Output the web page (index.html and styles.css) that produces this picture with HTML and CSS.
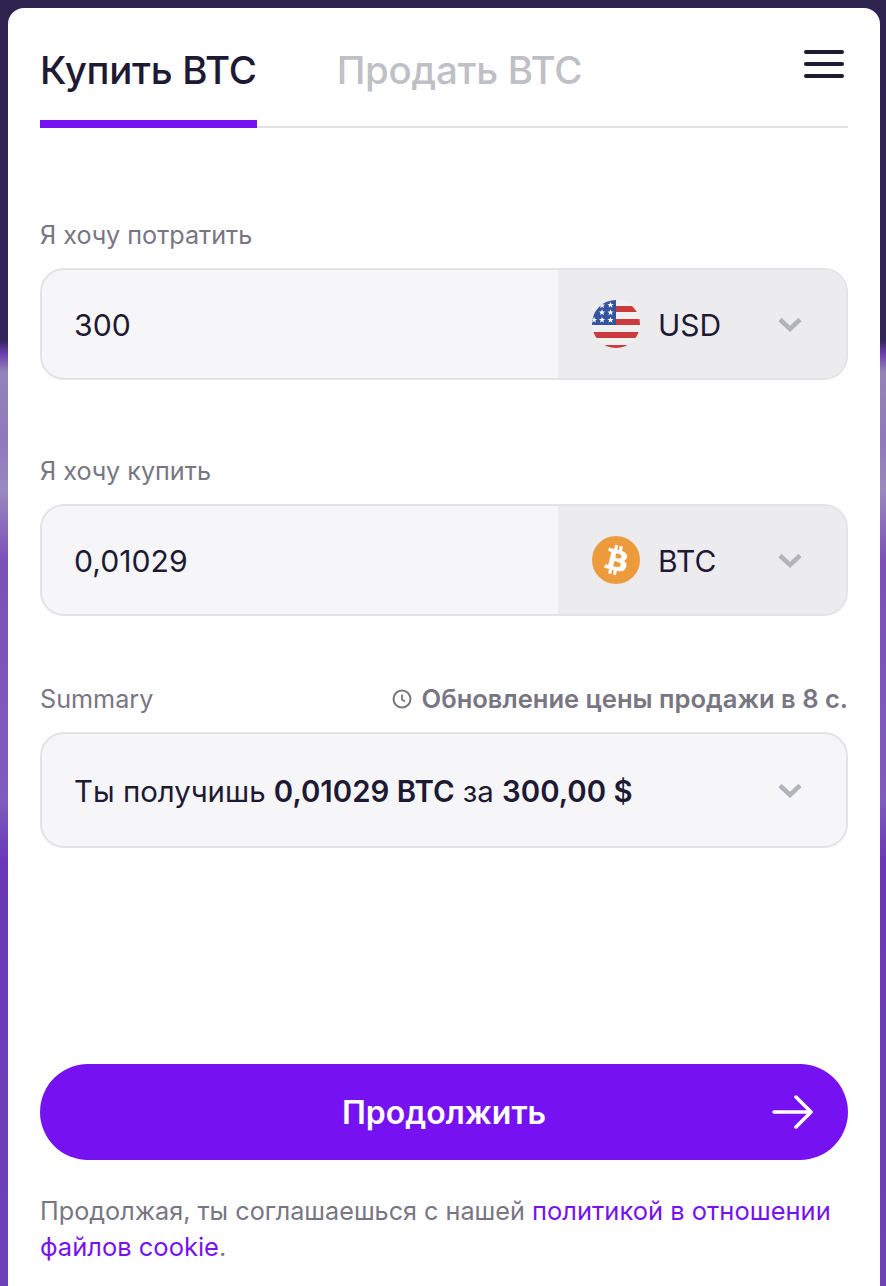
FILE: index.html
```html
<!doctype html>
<html>
<head>
<meta charset="utf-8">
<title>Купить BTC</title>
<link rel="stylesheet" href="styles.css">
</head>
<body>
<div class="card">
	<div class="tabs">
		<div class="tab active">Купить BTC</div>
		<div class="tab">Продать BTC</div>
		<div class="burger"><i></i><i></i><i></i></div>
	</div>

	<div class="label first">Я хочу потратить</div>
	<div class="field">
		<div class="value">300</div>
		<div class="picker">
			<svg class="coin" viewBox="0 0 48 48">
				<defs>
					<clipPath id="round"><circle cx="24" cy="24" r="24"/></clipPath>
					<polygon id="star" points="0,-3.200 .9,-1 3.100,-1 1.300,.4 2,2.700 0,1.300 -2,2.700 -1.300,.4 -3.100,-1 -.9,-1"/>
				</defs>
				<g clip-path="url(#round)">
					<rect width="48" height="48" fill="#f1f0f0"/>
					<rect x="24" y="6" width="24" height="6" fill="#cd3a3e"/>
					<rect x="24" y="19" width="24" height="6" fill="#cd3a3e"/>
					<rect y="32" width="48" height="6" fill="#cd3a3e"/>
					<rect y="45" width="48" height="3" fill="#cd3a3e"/>
					<rect width="24" height="25" fill="#35549f"/>
					<g fill="#fff">
						<use href="#star" x="18.500" y="5"/>
						<use href="#star" x="10" y="5.500"/>
						<use href="#star" x="18.500" y="12.500"/>
						<use href="#star" x="10" y="12.500"/>
						<use href="#star" x="18.500" y="20"/>
						<use href="#star" x="10" y="20"/>
						<use href="#star" x="2" y="20"/>
					</g>
				</g>
			</svg>
			<span class="code">USD</span>
			<svg class="chev" viewBox="0 0 24 15"><path d="M2 2.500 12 12 22 2.500" fill="none" stroke="#b3b3bb" stroke-width="4.500"/></svg>
		</div>
	</div>

	<div class="label second">Я хочу купить</div>
	<div class="field">
		<div class="value">0,01029</div>
		<div class="picker">
			<svg class="coin" viewBox="0 0 32 32">
				<circle cx="16" cy="16" r="16" fill="#ec9a3c"/>
				<path fill="#fff" fill-rule="evenodd" stroke="#fff" stroke-width=".3" d="M23.189 14.020c.314-2.096-1.283-3.223-3.465-3.975l.708-2.840-1.728-.430-.690 2.765c-.454-.114-.920-.220-1.385-.326l.695-2.783L15.596 6l-.708 2.839c-.376-.086-.746-.170-1.104-.260l.002-.009-2.384-.595-.460 1.846s1.283.294 1.256.312c.700.175.826.638.805 1.006l-.806 3.235c.048.012.110.030.180.057l-.183-.045-1.130 4.532c-.086.212-.303.531-.793.410.018.025-1.256-.313-1.256-.313l-.858 1.978 2.250.561c.418.105.828.215 1.231.318l-.715 2.872 1.727.430.708-2.840c.472.127.930.245 1.378.357l-.706 2.828 1.728.430.715-2.866c2.948.558 5.164.333 6.097-2.333.752-2.146-.037-3.385-1.588-4.192 1.130-.260 1.980-1.003 2.207-2.538zm-3.950 5.538c-.533 2.147-4.148.986-5.320.695l.950-3.805c1.172.293 4.929.872 4.370 3.110zm.535-5.569c-.487 1.953-3.495.960-4.470.717l.860-3.450c.975.243 4.118.696 3.610 2.733z"/>
			</svg>
			<span class="code">BTC</span>
			<svg class="chev" viewBox="0 0 24 15"><path d="M2 2.500 12 12 22 2.500" fill="none" stroke="#b3b3bb" stroke-width="4.500"/></svg>
		</div>
	</div>

	<div class="summary-head">
		<span>Summary</span>
		<span class="timer">
			<svg viewBox="0 0 20 20"><circle cx="10" cy="10" r="8.500" fill="none" stroke="#787683" stroke-width="2"/><path d="M10 5.500V10.500L13 12.500" fill="none" stroke="#787683" stroke-width="1.800"/></svg>
			Обновление цены продажи в 8 с.
		</span>
	</div>
	<div class="summary">
		<div>Ты получишь <b>0,01029 BTC</b> за <b>300,00 $</b></div>
		<svg class="chev" viewBox="0 0 24 15"><path d="M2 2.500 12 12 22 2.500" fill="none" stroke="#b3b3bb" stroke-width="4.500"/></svg>
	</div>

	<div class="button">
		Продолжить
		<svg class="arrow" viewBox="0 0 42 34"><path d="M2 17H39M24 2 39 17 24 32" fill="none" stroke="#fff" stroke-width="3.500" stroke-linecap="round" stroke-linejoin="round"/></svg>
	</div>

	<p class="legal">Продолжая, ты соглашаешься с нашей <a href="#">политикой в отношении файлов cookie</a>.</p>
</div>
</body>
</html>
```

FILE: styles.css
```css
html, body {
	margin: 0;
	height: 1286px;
	overflow: hidden;
}
body {
	box-sizing: border-box;
	padding: 8px 6px 0 8px;
	font-family: Inter, sans-serif;
	color: #1e1a34;
	background: linear-gradient(180deg, #2f2350 0, #33245a 340px, #6a3fb0 354px, #9484b8 372px, #8f78bc 440px, #9a88c0 490px, #7a50b8 560px, #7f5cc0 800px, #6a38b8 860px, #6d42b8 1286px);
}
.card {
	box-sizing: border-box;
	height: 1278px;
	padding: 0 32px;
	background: #fff;
	border-radius: 16px 16px 0 0;
}
.tabs {
	box-sizing: border-box;
	display: flex;
	height: 120px;
	gap: 80px;
	border-bottom: 2px solid #e3e3e6;
	position: relative;
}
.tab {
	padding-top: 36px;
	font-size: 38.500px;
	line-height: 52px;
	font-weight: 500;
	letter-spacing: -0.3px;
	color: #bfbfc6;
}
.tab.active {
	color: #1e1a34;
	position: relative;
}
.tab.active::after {
	content: "";
	position: absolute;
	left: 0;
	right: 0;
	bottom: -2px;
	height: 8px;
	background: #7612f2;
}
.burger {
	position: absolute;
	right: 4px;
	top: 42px;
	width: 40px;
	display: flex;
	flex-direction: column;
	gap: 8px;
}
.burger i {
	height: 4px;
	border-radius: 2px;
	background: #1e1a34;
}
.label {
	font-size: 25.200px;
	line-height: 32px;
	color: #787683;
}
.label.first {
	margin-top: 91px;
	margin-bottom: 17px;
}
.label.second {
	margin-top: 75px;
	margin-bottom: 17px;
}
.field {
	display: flex;
	height: 112px;
	box-sizing: border-box;
	border: 2px solid #e3e3e6;
	border-radius: 24px;
	background: #f6f6f9;
	overflow: hidden;
}
.value {
	flex: 1;
	padding-left: 32px;
	font-size: 30.200px;
	line-height: 110px;
}
.picker {
	display: flex;
	align-items: center;
	box-sizing: border-box;
	width: 288px;
	padding-left: 34px;
	background: #ececef;
}
.coin {
	width: 48px;
	height: 48px;
	flex: none;
}
.code {
	width: 138px;
	padding: 2px 0 0 18px;
	box-sizing: border-box;
	font-size: 30px;
}
.chev {
	width: 24px;
	height: 15px;
	flex: none;
}
.summary-head {
	display: flex;
	justify-content: space-between;
	align-items: center;
	margin-top: 67px;
	margin-bottom: 17px;
	font-size: 25.200px;
	line-height: 32px;
	color: #787683;
}
.timer {
	display: flex;
	align-items: center;
	gap: 10px;
	font-size: 25.550px;
	font-weight: 600;
}
.timer svg {
	width: 20px;
	height: 20px;
}
.summary {
	display: flex;
	align-items: center;
	justify-content: space-between;
	box-sizing: border-box;
	height: 116px;
	padding: 2px 44px 0 32px;
	border: 2px solid #e3e3e6;
	border-radius: 24px;
	background: #f6f6f9;
	font-size: 29.400px;
}
.summary .chev {
	margin-top: -2px;
}
.summary b {
	font-weight: 600;
}
.button {
	display: flex;
	align-items: center;
	justify-content: center;
	position: relative;
	height: 96px;
	margin-top: 216px;
	border-radius: 48px;
	background: #7612f2;
	color: #fff;
	font-size: 32px;
	font-weight: 600;
}
.arrow {
	position: absolute;
	right: 34px;
	top: 31px;
	width: 42px;
	height: 34px;
}
.legal {
	margin: 33px 0 0;
	font-size: 25.200px;
	line-height: 36px;
	color: #787683;
}
.legal a {
	color: #7612f2;
	font-size: 25.500px;
	text-decoration: none;
}
```
